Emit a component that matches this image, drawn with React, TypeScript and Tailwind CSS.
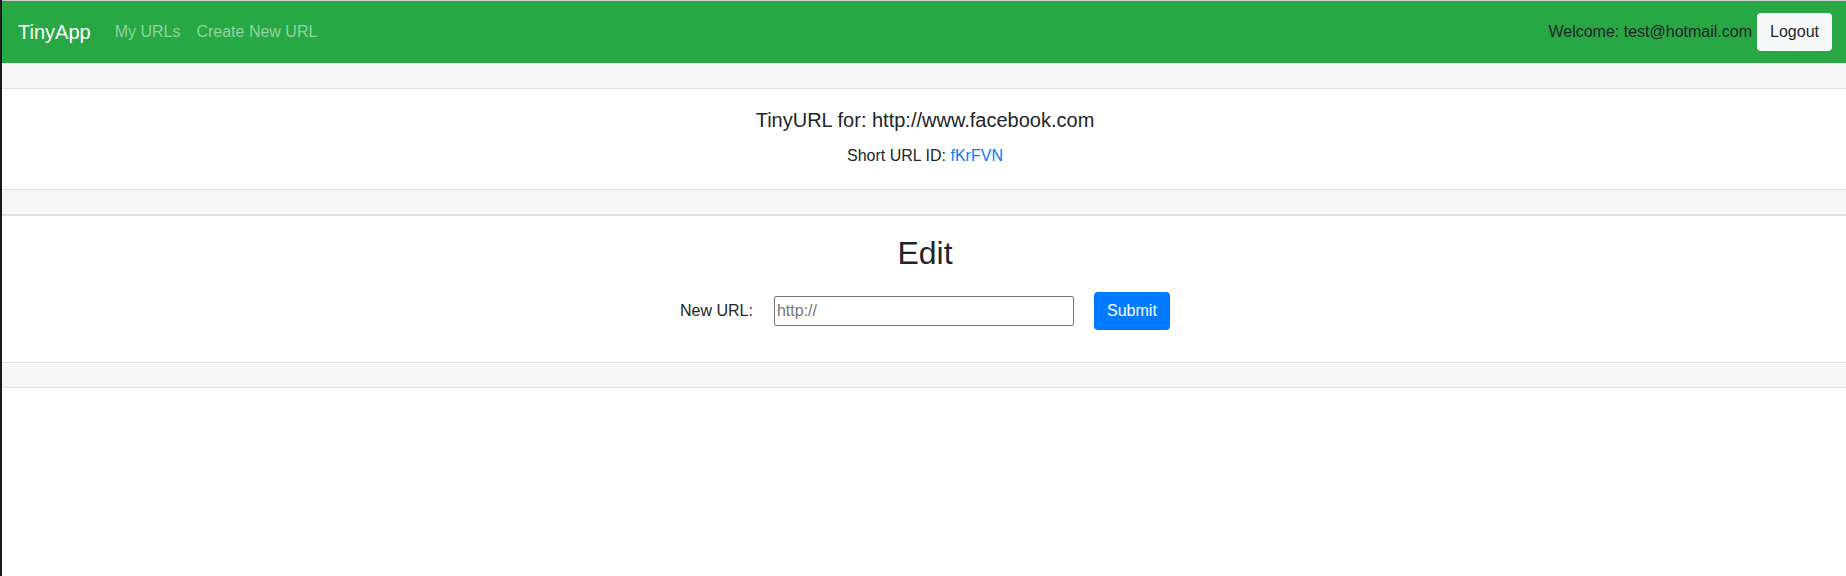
import React from 'react';

const App: React.FC = () => {
  return (
    <div className="flex min-h-screen bg-white font-['Liberation_Sans',Arial,sans-serif] text-[16px] text-[#212529]">
      {/* dark window edge */}
      <div className="w-[2px] shrink-0 bg-[#1b171c]"></div>

      <div className="flex flex-1 flex-col">
        <div className="h-px bg-[#cfcfcf]"></div>

        {/* Navbar */}
        <nav className="flex h-[62px] items-center bg-[#28a745] pl-4 pr-[14px]">
          <a href="#" className="mr-4 text-[20px] leading-[30px] text-white">
            TinyApp
          </a>
          <a href="#" className="px-2 leading-[24px] text-[#93d3a2]">
            My URLs
          </a>
          <a href="#" className="px-2 leading-[24px] text-[#93d3a2]">
            Create New URL
          </a>
          <div className="ml-auto flex items-center gap-[5px]">
            <span className="leading-[24px] text-[#212529]">Welcome: test@hotmail.com</span>
            <button className="h-[38px] w-[75px] rounded-[4px] bg-[#f8f9fa] text-[#212529]">
              Logout
            </button>
          </div>
        </nav>

        <div className="h-[26px] border-b border-[#dfdfdf] bg-[#f7f7f7]"></div>

        {/* Short URL card */}
        <div className="flex h-[100px] flex-col items-center pl-[2px] pt-[19px]">
          <h5 className="text-[20px] leading-[24px]">TinyURL for: http://www.facebook.com</h5>
          <p className="mt-[12px] leading-[24px]">
            Short URL ID: <a href="#" className="text-[#007bff]">fKrFVN</a>
          </p>
        </div>

        <div className="h-[27px] border-t border-b-2 border-[#dfdfdf] bg-[#f7f7f7]"></div>

        {/* Edit card */}
        <div className="flex h-[146px] flex-col items-center pl-[2px] pt-[18px]">
          <h2 className="text-[32px] leading-[38px]">Edit</h2>
          <form className="mt-[20px] flex items-center" onSubmit={(e) => e.preventDefault()}>
            <label className="mr-[21px] leading-[24px]">New URL:</label>
            <input
              type="text"
              placeholder="http://"
              className="h-[30px] w-[300px] rounded-[2px] border border-[#767676] px-[2px] text-[16px] placeholder:text-[#757575]"
            />
            <button
              type="submit"
              className="ml-[20px] h-[38px] w-[76px] rounded-[4px] bg-[#007bff] text-white"
            >
              Submit
            </button>
          </form>
        </div>

        <div className="h-[26px] border-y border-[#dfdfdf] bg-[#f7f7f7]"></div>
      </div>
    </div>
  );
};

export default App;
